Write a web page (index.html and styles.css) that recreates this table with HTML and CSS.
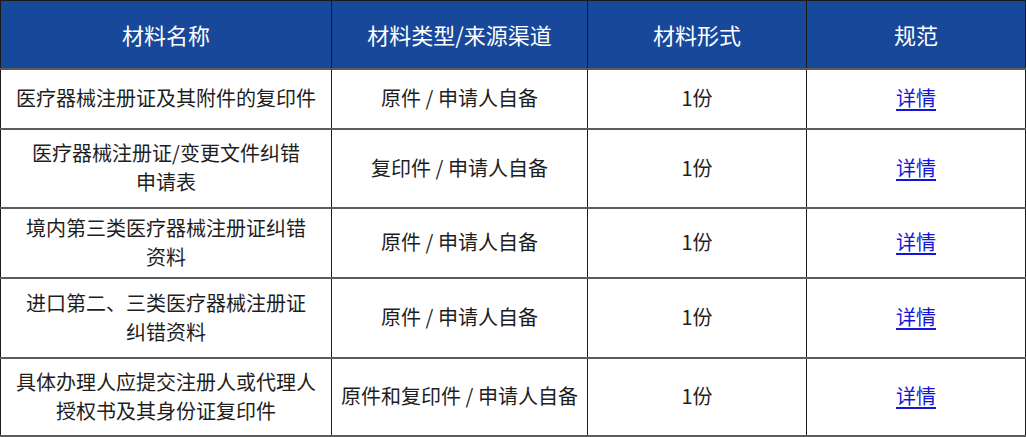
FILE: index.html
```html
<!DOCTYPE html>
<html lang="zh-CN">
<head>
<meta charset="utf-8">
<title>材料清单</title>
<link rel="stylesheet" href="styles.css">
</head>
<body>
<table class="materials">
  <colgroup>
    <col class="c-name">
    <col class="c-type">
    <col class="c-form">
    <col class="c-spec">
  </colgroup>
  <thead>
    <tr class="head">
      <th>材料名称</th>
      <th>材料类型/来源渠道</th>
      <th>材料形式</th>
      <th>规范</th>
    </tr>
  </thead>
  <tbody>
    <tr class="r1">
      <td>医疗器械注册证及其附件的复印件</td>
      <td>原件 / 申请人自备</td>
      <td>1份</td>
      <td><a href="#">详情</a></td>
    </tr>
    <tr class="r2">
      <td>医疗器械注册证/变更文件纠错<br>申请表</td>
      <td>复印件 / 申请人自备</td>
      <td>1份</td>
      <td><a href="#">详情</a></td>
    </tr>
    <tr class="r3">
      <td>境内第三类医疗器械注册证纠错<br>资料</td>
      <td>原件 / 申请人自备</td>
      <td>1份</td>
      <td><a href="#">详情</a></td>
    </tr>
    <tr class="r4">
      <td>进口第二、三类医疗器械注册证<br>纠错资料</td>
      <td>原件 / 申请人自备</td>
      <td>1份</td>
      <td><a href="#">详情</a></td>
    </tr>
    <tr class="r5">
      <td>具体办理人应提交注册人或代理人<br>授权书及其身份证复印件</td>
      <td>原件和复印件 / 申请人自备</td>
      <td>1份</td>
      <td><a href="#">详情</a></td>
    </tr>
  </tbody>
</table>
</body>
</html>
```

FILE: styles.css
```css
html, body {
  margin: 0;
  padding: 0;
  background: #ffffff;
}

body {
  font-family: "Noto Sans CJK SC", "Noto Sans", "Liberation Sans", sans-serif;
  color: #1e1e1e;
}

.materials {
  border-collapse: collapse;
  table-layout: fixed;
  width: 1025px;
  margin: 0;
}

.c-name { width: 331px; }
.c-type { width: 256px; }
.c-form { width: 219px; }
.c-spec { width: 219px; }

.materials th,
.materials td {
  border-left: 1px solid #1a1a1a;
  border-right: 1px solid #1a1a1a;
  border-top: 2px solid #5c5c5c;
  border-bottom: 2px solid #5c5c5c;
  text-align: center;
  vertical-align: middle;
  padding: 0 4px;
}

.materials th {
  background: #17489a;
  color: #ffffff;
  font-weight: 400;
  font-size: 22px;
  border-top: 1px solid #1a1a1a;
  border-bottom: 1px solid #1a1a1a;
}

.materials td {
  font-size: 20px;
  line-height: 29px;
  padding-bottom: 2px;
}

.materials a {
  color: #1515d8;
  text-decoration: underline;
  text-underline-offset: 3px;
}

.head { height: 68px; }
.r1 { height: 60px; }
.r2 { height: 79px; }
.r3 { height: 70px; }
.r4 { height: 80px; }
.r5 { height: 78px; }
```
